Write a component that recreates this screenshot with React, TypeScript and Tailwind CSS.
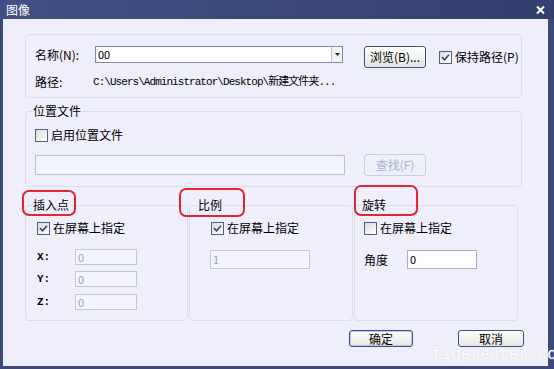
import type { ReactNode } from "react"

function Checkbox({ checked }: { checked?: boolean }) {
  return (
    <span className="flex h-[13px] w-[13px] shrink-0 items-center justify-center border border-[#4f6283] bg-linear-to-br from-[#dcdcd6] to-white">
      {checked && (
        <svg width="9" height="9" viewBox="0 0 9 9">
          <path d="M1 4.2 L3.5 6.8 L8 1.8" stroke="#344a74" strokeWidth="1.7" fill="none" />
        </svg>
      )}
    </span>
  )
}

function Btn({ children, className, disabled }: { children: ReactNode; className?: string; disabled?: boolean }) {
  return (
    <button
      className={
        disabled
          ? `flex items-center justify-center rounded-[3px] border border-[#c6cfdc] bg-[#edf0f8] leading-[14px] text-[#a9b6d2] ${className}`
          : `flex items-center justify-center rounded-[3px] border border-[#3d5180] bg-linear-to-b from-white to-[#e6e6e0] leading-[14px] text-black ${className}`
      }
    >
      {children}
    </button>
  )
}

function Legend({ children, className }: { children: ReactNode; className?: string }) {
  return <span className={`-mt-[9px] block w-fit bg-[#efeffb] px-[1px] leading-[16px] ${className}`}>{children}</span>
}

function SmallInput({ value, className }: { value: string; className?: string }) {
  return (
    <div className={`border border-[#c3c8d2] bg-[#f4f4fc] pl-[2px] text-[11px] text-[#9ea2ac] ${className}`}>{value}</div>
  )
}

export default function App() {
  return (
    <div className="relative flex h-[369px] w-[554px] flex-col overflow-hidden bg-[#3b4879] font-['Noto_Sans_CJK_SC',sans-serif] text-[12px] text-black">
      {/* title bar */}
      <div className="flex h-[19px] shrink-0 items-center justify-between bg-linear-to-r from-[#424f84] to-[#33406e] pl-[6px] pr-[9px] text-white">
        <span className="leading-[16px]">图像</span>
        <svg width="9" height="8" viewBox="0 0 9 8">
          <path d="M1 0.5 L8 7.5 M8 0.5 L1 7.5" stroke="white" strokeWidth="2" />
        </svg>
      </div>

      <div className="mb-[3px] ml-[3px] mr-[6px] flex flex-1 flex-col bg-[#efeffb] pl-[22px] pt-[15px]">
        {/* name / path */}
        <div className="h-[64px] w-[497px] rounded-[4px] border border-[#dddde9] pl-[9px] pt-[11px]">
          <div className="flex items-start">
            <span className="w-[60px] leading-[17px]">名称(N):</span>
            <div className="flex h-[17px] w-[248px] border border-[#7f8ea8] bg-white">
              <span className="flex-1 pl-[2px] text-[11px] leading-[15px]">00</span>
              <span className="flex w-[11px] items-center justify-center border-l border-[#c4c4c4] bg-[#f2f2f2]">
                <svg width="5" height="3" viewBox="0 0 5 3">
                  <path d="M0 0 H5 L2.5 3 Z" fill="#222" />
                </svg>
              </span>
            </div>
            <Btn className="ml-[21px] h-[22px] w-[62px]">浏览(B)...</Btn>
            <label className="ml-[13px] mt-[3px] flex items-center gap-[3px] leading-[16px]">
              <Checkbox checked />
              保持路径(P)
            </label>
          </div>
          <div className="mt-[6px] flex">
            <span className="w-[58px] leading-[16px]">路径:</span>
            <span className="font-['Liberation_Mono','Noto_Sans_CJK_SC',monospace] text-[11px] leading-[16px] tracking-[-0.95px]">
              {"C:\\Users\\Administrator\\Desktop\\新建文件夹..."}
            </span>
          </div>
        </div>

        {/* location file */}
        <div className="mt-[13px] h-[76px] w-[497px] rounded-[4px] border border-[#dddde9]">
          <Legend className="ml-[6px]">位置文件</Legend>
          <label className="ml-[9px] mt-[9px] flex items-center gap-[3px] leading-[14px]">
            <Checkbox />
            启用位置文件
          </label>
          <div className="ml-[9px] mt-[12px] flex items-center">
            <div className="h-[20px] w-[310px] border border-[#bcc3cf] bg-[#f3f3fb]" />
            <Btn disabled className="ml-[19px] h-[22px] w-[62px]">
              查找(F)
            </Btn>
          </div>
        </div>

        {/* insert / scale / rotate */}
        <div className="mt-[18px] flex gap-[1px]">
          <div className="h-[116px] w-[163px] rounded-[4px] border border-[#dddde9]">
            <Legend className="ml-[6px]">插入点</Legend>
            <label className="ml-[11px] mt-[8px] flex items-center gap-[3px] leading-[14px]">
              <Checkbox checked />
              在屏幕上指定
            </label>
            <div className="ml-[11px] mt-[14px] flex flex-col">
              {["X:", "Y:", "Z:"].map((l, i) => (
                <div key={l} className={`flex items-center ${i === 1 ? "mt-[6px]" : i === 2 ? "mt-[7px]" : ""}`}>
                  <span className="w-[38px] font-['Liberation_Mono',monospace] text-[11px] font-bold leading-[16px]">{l}</span>
                  <SmallInput value="0" className="h-[16px] w-[62px] leading-[14px]" />
                </div>
              ))}
            </div>
          </div>

          <div className="h-[116px] w-[164px] rounded-[4px] border border-[#dddde9]">
            <Legend className="ml-[7px]">比例</Legend>
            <label className="ml-[21px] mt-[8px] flex items-center gap-[3px] leading-[14px]">
              <Checkbox checked />
              在屏幕上指定
            </label>
            <SmallInput value="1" className="ml-[20px] mt-[15px] h-[19px] w-[100px] leading-[17px]" />
          </div>

          <div className="h-[116px] w-[164px] rounded-[4px] border border-[#dddde9]">
            <Legend className="ml-[6px]">旋转</Legend>
            <label className="ml-[9px] mt-[8px] flex items-center gap-[3px] leading-[14px]">
              <Checkbox />
              在屏幕上指定
            </label>
            <div className="ml-[9px] mt-[15px] flex items-center">
              <span className="w-[43px] leading-[16px]">角度</span>
              <div className="h-[19px] w-[70px] border border-[#a9b0bc] bg-white pl-[2px] text-[11px] leading-[17px]">0</div>
            </div>
          </div>
        </div>

        {/* dialog buttons */}
        <div className="mr-[24px] mt-[9px] flex justify-end gap-[45px]">
          <Btn className="h-[17px] w-[64px] shadow-[inset_0_0_0_1px_#b8c8e8]">确定</Btn>
          <Btn className="h-[17px] w-[66px]">取消</Btn>
        </div>
      </div>

      {/* annotations */}
      <div className="absolute left-[22px] top-[190px] h-[26px] w-[54px] rounded-[7px] border-2 border-[#e3262f]" />
      <div className="absolute left-[179px] top-[188px] h-[29px] w-[66px] rounded-[7px] border-2 border-[#e3262f]" />
      <div className="absolute left-[354px] top-[185px] h-[31px] w-[64px] rounded-[7px] border-2 border-[#e3262f]" />

      {/* watermark */}
      <span className="absolute left-[432px] top-[348px] whitespace-nowrap font-['Liberation_Mono',monospace] text-[16px] leading-[14px] text-white [text-shadow:0_0_1px_#c4c8da]">
        tigerenter.com
      </span>
    </div>
  )
}
